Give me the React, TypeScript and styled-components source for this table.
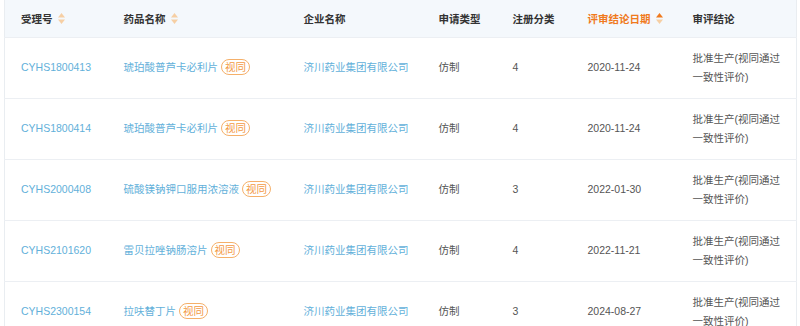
import styled, { createGlobalStyle } from "styled-components";

const GlobalStyle = createGlobalStyle`
  body {
    margin: 0;
    background: #fff;
    font-family: "Liberation Sans", "Noto Sans CJK SC", sans-serif;
  }
`;

const Wrapper = styled.div`
  padding: 0 4px;
`;

const Table = styled.table`
  width: 792px;
  border-collapse: collapse;
  table-layout: fixed;
  border-left: 1px solid #e9edf1;
  border-right: 1px solid #e9edf1;
  font-size: 10.5px;
`;

const HeadCell = styled.th<{ $active?: boolean; $w: number }>`
  width: ${(p) => p.$w}px;
  height: 37px;
  padding: 0 16px;
  box-sizing: border-box;
  background: #f4f8fc;
  text-align: left;
  font-weight: bold;
  color: ${(p) => (p.$active ? "#f07a1e" : "#333")};
  border-bottom: 1px solid #eceff3;
  white-space: nowrap;
`;

const HeadInner = styled.span`
  display: inline-flex;
  align-items: center;
  gap: 5px;
`;

const Row = styled.tr`
  height: 61px;
  border-bottom: 1px solid #eceff3;
`;

const Cell = styled.td<{ $link?: boolean; $wrap?: boolean }>`
  padding: 0 16px;
  color: ${(p) => (p.$link ? "#62b0da" : "#555")};
  line-height: 19px;
  vertical-align: middle;
  white-space: ${(p) => (p.$wrap ? "normal" : "nowrap")};
  overflow: visible;
`;

const Badge = styled.span`
  display: inline-block;
  margin-left: 3px;
  padding: 0 3px;
  border: 1px solid #f5b06a;
  border-radius: 8px;
  color: #f39a45;
  line-height: 14px;
`;

const SortIcon = ({ active }: { active?: boolean }) => (
  <svg width="7" height="11" viewBox="0 0 7 11">
    <polygon points="3.5,0 7,4.5 0,4.5" fill={active ? "#f07a1e" : "#f6cfa4"} />
    <polygon points="0,6.5 7,6.5 3.5,11" fill="#f6cfa4" />
  </svg>
);

const columns = [
  { title: "受理号", w: 103, sort: true },
  { title: "药品名称", w: 180, sort: true },
  { title: "企业名称", w: 135 },
  { title: "申请类型", w: 74 },
  { title: "注册分类", w: 75 },
  { title: "评审结论日期", w: 105, sort: true, active: true },
  { title: "审评结论", w: 120 },
];

const rows = [
  { id: "CYHS1800413", name: "琥珀酸普芦卡必利片", cls: "4", date: "2020-11-24" },
  { id: "CYHS1800414", name: "琥珀酸普芦卡必利片", cls: "4", date: "2020-11-24" },
  { id: "CYHS2000408", name: "硫酸镁钠钾口服用浓溶液", cls: "3", date: "2022-01-30" },
  { id: "CYHS2101620", name: "雷贝拉唑钠肠溶片", cls: "4", date: "2022-11-21" },
  { id: "CYHS2300154", name: "拉呋替丁片", cls: "3", date: "2024-08-27" },
];

const App = () => (
  <Wrapper>
    <GlobalStyle />
    <Table>
      <thead>
        <tr>
          {columns.map((c) => (
            <HeadCell key={c.title} $w={c.w} $active={c.active}>
              <HeadInner>
                {c.title}
                {c.sort && <SortIcon active={c.active} />}
              </HeadInner>
            </HeadCell>
          ))}
        </tr>
      </thead>
      <tbody>
        {rows.map((r) => (
          <Row key={r.id}>
            <Cell $link>{r.id}</Cell>
            <Cell $link>
              {r.name}
              <Badge>视同</Badge>
            </Cell>
            <Cell $link>济川药业集团有限公司</Cell>
            <Cell>仿制</Cell>
            <Cell>{r.cls}</Cell>
            <Cell>{r.date}</Cell>
            <Cell $wrap>批准生产(视同通过一致性评价)</Cell>
          </Row>
        ))}
      </tbody>
    </Table>
  </Wrapper>
);

export default App;
